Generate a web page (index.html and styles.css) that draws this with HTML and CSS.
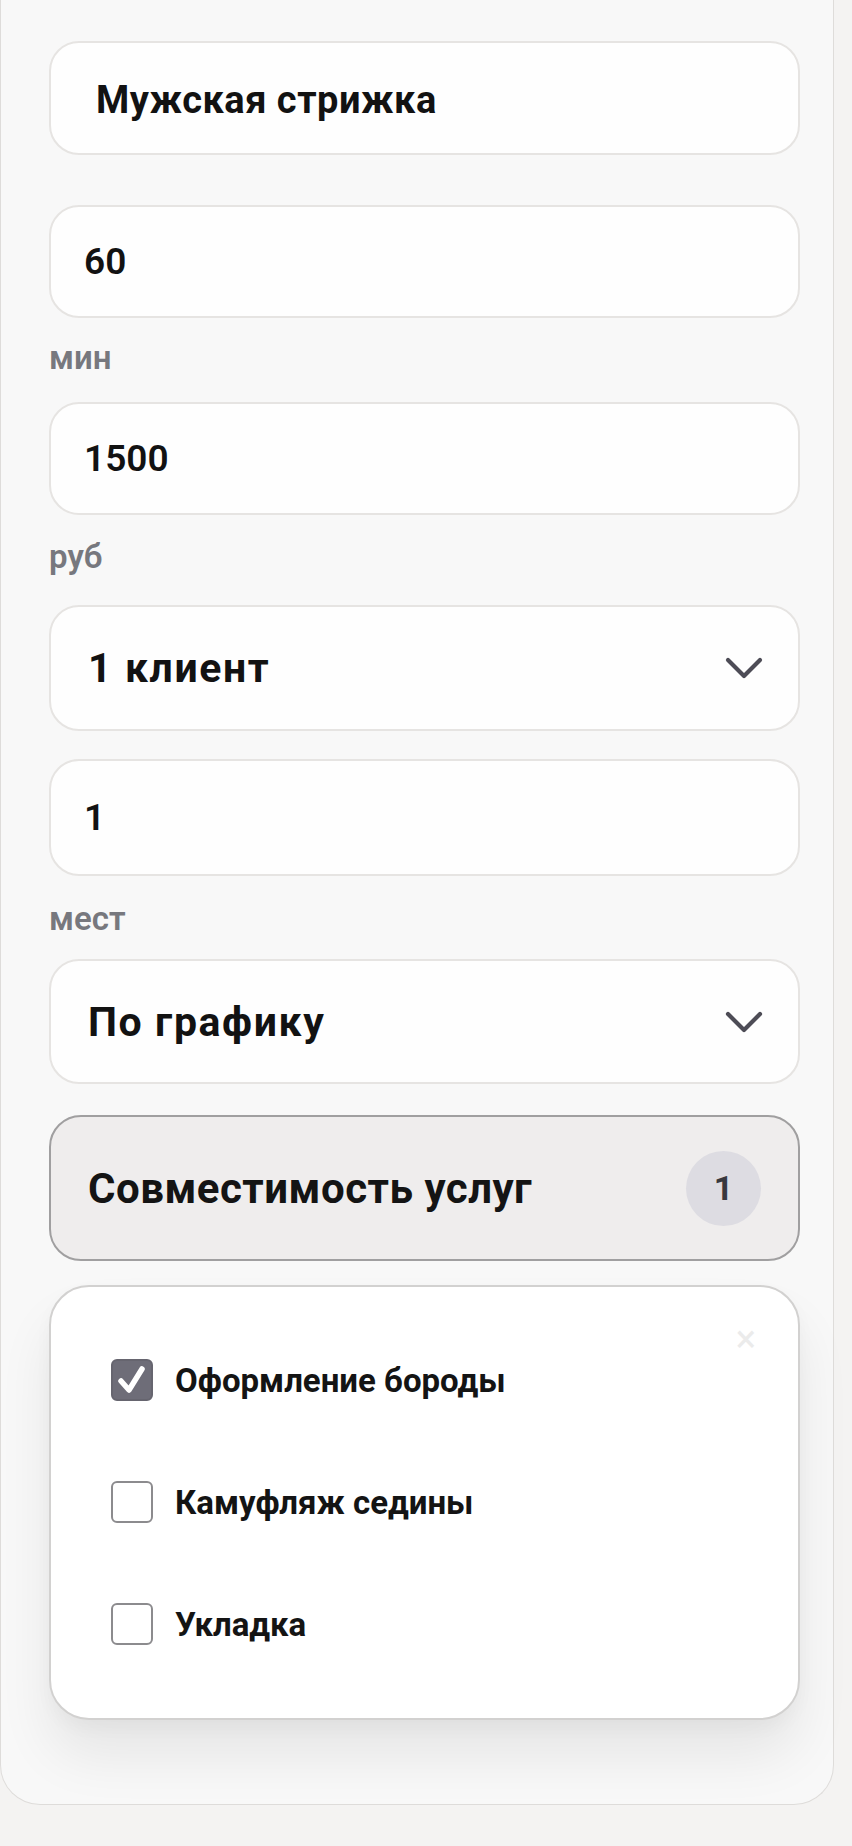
FILE: index.html
```html
<!DOCTYPE html>
<html lang="ru">
<head>
<meta charset="utf-8">
<title>Услуга</title>
<link rel="stylesheet" href="styles.css">
</head>
<body>
<div class="card">
  <div class="field field-name"><span class="value">Мужская стрижка</span></div>
  <div class="field field-h113 gap-50"><span class="value">60</span></div>
  <div class="unit unit-min">мин</div>
  <div class="field field-h113 gap-24"><span class="value">1500</span></div>
  <div class="unit unit-rub">руб</div>
  <div class="field select field-h126 gap-28">
    <span class="value strong">1 клиент</span>
    <svg class="chev" viewBox="0 0 38 22" width="38" height="22"><polyline points="3,3 19,19 35,3" fill="none" stroke="#4d4c56" stroke-width="4.2" stroke-linecap="round" stroke-linejoin="round"/></svg>
  </div>
  <div class="field field-h117 gap-28"><span class="value">1</span></div>
  <div class="unit unit-mest">мест</div>
  <div class="field select field-h125 gap-20">
    <span class="value strong">По графику</span>
    <svg class="chev" viewBox="0 0 38 22" width="38" height="22"><polyline points="3,3 19,19 35,3" fill="none" stroke="#4d4c56" stroke-width="4.2" stroke-linecap="round" stroke-linejoin="round"/></svg>
  </div>
  <div class="compat">
    <span class="compat-title">Совместимость услуг</span>
    <span class="badge">1</span>
  </div>
  <div class="panel">
    <span class="close">×</span>
    <label class="row">
      <span class="box checked"><svg viewBox="0 0 42 42" width="42" height="42"><polyline points="10,22 18,31 31,10" fill="none" stroke="#ffffff" stroke-width="5.5" stroke-linecap="round" stroke-linejoin="round"/></svg></span>
      <span class="row-label">Оформление бороды</span>
    </label>
    <label class="row">
      <span class="box"></span>
      <span class="row-label">Камуфляж седины</span>
    </label>
    <label class="row">
      <span class="box"></span>
      <span class="row-label">Укладка</span>
    </label>
  </div>
</div>
</body>
</html>
```
FILE: styles.css
```css
html, body {
  margin: 0;
  padding: 0;
}
body {
  background: #f4f3f2;
  font-family: Roboto, "Noto Sans", "DejaVu Sans", sans-serif;
  color: #141414;
  width: 852px;
  min-height: 1846px;
}
.card {
  width: 834px;
  box-sizing: border-box;
  background: #f8f8f8;
  border: 1px solid #dedcda;
  border-top: none;
  border-radius: 0 0 40px 40px;
  padding: 41px 33px 84px 48px;
  display: flex;
  flex-direction: column;
}
.field {
  box-sizing: border-box;
  background: #fefefe;
  border: 2px solid #e6e4e2;
  border-radius: 30px;
  display: flex;
  align-items: center;
  padding-left: 33px;
}
.field-name {
  height: 114px;
  padding-left: 45px;
  padding-top: 4px;
}
.field-h113 { height: 113px; }
.field-h117 { height: 117px; }
.field-h125 { height: 125px; }
.field-h126 { height: 126px; }
.gap-50 { margin-top: 50px; }
.gap-28 { margin-top: 28px; }
.gap-24 { margin-top: 24px; }
.gap-20 { margin-top: 20px; }
.value {
  font-size: 37px;
  font-weight: 600;
  color: #121212;
}
.field-name .value {
  font-weight: 700;
  font-size: 38px;
  letter-spacing: 0.5px;
}
.select {
  padding-left: 37px;
  padding-right: 35px;
  justify-content: space-between;
}
.value.strong {
  font-weight: 700;
  font-size: 41px;
  letter-spacing: 1.6px;
}
.chev {
  display: block;
}
.unit {
  font-size: 33px;
  line-height: 40px;
  font-weight: 600;
  color: #77787e;
}
.unit-min { margin-top: 20px; }
.unit-rub { margin-top: 22px; }
.unit-mest { margin-top: 23px; }
.compat {
  margin-top: 31px;
  height: 146px;
  box-sizing: border-box;
  background: #efeded;
  border: 2px solid #a09fa0;
  border-radius: 32px;
  display: flex;
  align-items: center;
  justify-content: space-between;
  padding: 0 37px 0 37px;
}
.compat-title {
  font-size: 42px;
  font-weight: 700;
  letter-spacing: 0.5px;
  color: #141414;
}
.badge {
  width: 75px;
  height: 75px;
  border-radius: 50%;
  background: #dddce2;
  display: flex;
  align-items: center;
  justify-content: center;
  font-size: 34px;
  font-weight: 700;
  color: #38383e;
}
.panel {
  position: relative;
  margin-top: 24px;
  height: 435px;
  box-sizing: border-box;
  background: #ffffff;
  border: 2px solid #d2d1d0;
  border-radius: 40px;
  box-shadow: 0 36px 54px rgba(0, 0, 0, 0.075), 0 8px 18px rgba(0, 0, 0, 0.03);
  padding: 72px 0 0 60px;
  display: flex;
  flex-direction: column;
  gap: 80px;
}
.close {
  position: absolute;
  right: 42px;
  top: 32px;
  font-size: 38px;
  line-height: 40px;
  color: #ebebeb;
  font-weight: 400;
}
.row {
  display: flex;
  align-items: center;
  height: 42px;
  gap: 22px;
}
.box {
  width: 42px;
  height: 42px;
  box-sizing: border-box;
  border: 2px solid #8c8b8e;
  border-radius: 6px;
  background: #ffffff;
  display: block;
}
.box.checked {
  background: #6e6d78;
  border-color: #66656f;
}
.box svg {
  display: block;
  margin: -2px;
}
.row-label {
  font-size: 33px;
  font-weight: 700;
  color: #141414;
}
```
